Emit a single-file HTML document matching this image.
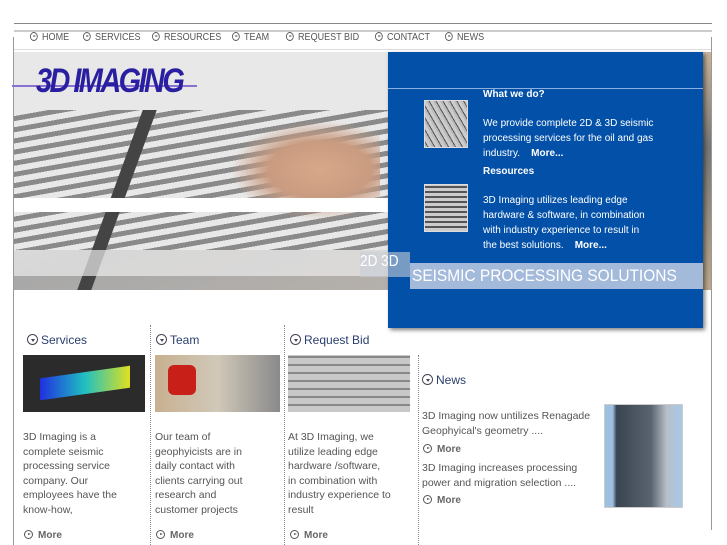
<!DOCTYPE html>
<html><head><style>
*{margin:0;padding:0;box-sizing:border-box}
body{width:727px;height:545px;background:#fff;font-family:"Liberation Sans",sans-serif;position:relative;overflow:hidden}
.a{position:absolute}
.nav{top:31px;font-size:10.5px;color:#555;transform:scaleX(0.86);transform-origin:left;white-space:nowrap}
.ic{display:inline-block;width:9px;height:9px;border:1px solid #555;border-radius:50%;position:relative;vertical-align:-1px;margin-right:5px}
.ic:after{content:"";position:absolute;left:2.5px;top:1.8px;border-left:3px solid #555;border-top:1.8px solid transparent;border-bottom:1.8px solid transparent}
.icd{display:inline-block;width:11px;height:11px;border:1px solid #445;border-radius:50%;position:relative;vertical-align:-1px;margin-right:3px}
.icd:after{content:"";position:absolute;left:2.5px;top:3.5px;border-top:3px solid #445;border-left:2px solid transparent;border-right:2px solid transparent}
h3{position:absolute;font-size:12px;font-weight:normal;color:#2a3e6e}
.t{position:absolute;font-size:10.5px;line-height:14.6px;color:#555}
.more{position:absolute;font-size:10px;color:#666;font-weight:bold}
.dot{position:absolute;border-left:1px dotted #888;width:0}
.w{color:#fff;font-size:10px;line-height:15px;position:absolute}
</style></head><body>
<div class="a" style="left:14px;top:23px;width:698px;height:1px;background:#888"></div>
<div class="a" style="left:14px;top:30px;width:698px;height:2px;background:#ccc"></div>
<div class="a" style="left:13px;top:37px;width:1px;height:508px;background:#999"></div>
<div class="a" style="left:711px;top:37px;width:1px;height:493px;background:#999"></div>
<div class="a" style="left:14px;top:49px;width:697px;height:1px;background:#ddd"></div>
<div class="a nav" style="left:30px;top:31px"><span class="ic"></span>HOME</div>
<div class="a nav" style="left:83px;top:31px"><span class="ic"></span>SERVICES</div>
<div class="a nav" style="left:152px;top:31px"><span class="ic"></span>RESOURCES</div>
<div class="a nav" style="left:232px;top:31px"><span class="ic"></span>TEAM</div>
<div class="a nav" style="left:286px;top:31px"><span class="ic"></span>REQUEST BID</div>
<div class="a nav" style="left:375px;top:31px"><span class="ic"></span>CONTACT</div>
<div class="a nav" style="left:445px;top:31px"><span class="ic"></span>NEWS</div>
<!-- hero -->
<div class="a" style="left:14px;top:52px;width:374px;height:238px;background:linear-gradient(160deg,#e0e0e0 0%,#c8c8c8 35%,#a8a8a8 60%,#b5b0ab 100%)"></div>
<div class="a" style="left:14px;top:52px;width:374px;height:58px;background:#e8e8e8"></div>
<div class="a" style="left:14px;top:110px;width:374px;height:140px;background:repeating-linear-gradient(170deg,#e8e8e8 0 6px,#8a8a8a 6px 11px)"></div>
<div class="a" style="left:110px;top:110px;width:14px;height:180px;background:#444;transform:skewX(-20deg)"></div>
<div class="a" style="left:230px;top:120px;width:150px;height:100px;background:radial-gradient(ellipse at 60% 50%,#d9a88a 0%,#c99b80 40%,transparent 70%)"></div>
<div class="a" style="left:703px;top:52px;width:8px;height:238px;background:linear-gradient(#c9b49a,#777 40%,#bca88c)"></div>
<div class="a" style="left:14px;top:198px;width:396px;height:14px;background:#fff"></div>
<div class="a" style="left:14px;top:250px;width:374px;height:26px;background:rgba(235,235,235,0.7)"></div>
<div class="a" style="left:12px;top:85px;width:185px;height:2px;background:#8a70d0"></div>
<div class="a" style="left:36px;top:62px;font-family:'Liberation Sans',sans-serif;font-style:italic;font-weight:bold;font-size:34px;color:#2a1fa0;letter-spacing:-3px;transform:scaleX(0.85);transform-origin:left">3D IMAGING</div>
<div class="a" style="left:388px;top:52px;width:315px;height:276px;background:#0250a8;box-shadow:2px 2px 4px rgba(0,0,0,.5)"></div>
<div class="a" style="left:388px;top:88px;width:315px;height:1px;background:#8cb0e0"></div>
<div class="a" style="left:410px;top:263px;width:293px;height:26px;background:#a4badb"></div>
<div class="a" style="left:360px;top:252px;width:50px;height:25px;background:rgba(200,205,215,0.6)"></div>
<div class="a" style="left:360px;top:253px;font-size:16px;color:#fff;transform:scaleX(0.85);transform-origin:left">2D 3D</div>
<div class="a" style="left:412px;top:266px;font-size:17px;color:#fff;transform:scaleX(0.91);transform-origin:left;white-space:nowrap">SEISMIC PROCESSING SOLUTIONS</div>
<div class="a" style="left:424px;top:100px;width:44px;height:48px;background:repeating-linear-gradient(60deg,#bbb 0 2px,#555 2px 3px,#ccc 3px 6px);border:1px solid #ddd"></div>
<div class="a" style="left:424px;top:184px;width:44px;height:48px;background:repeating-linear-gradient(0deg,#ccc 0 3px,#555 3px 5px);border:1px solid #ddd"></div>
<div class="w" style="left:483px;top:87px;font-weight:bold">What we do?</div>
<div class="w" style="left:483px;top:116px">We provide complete 2D &amp; 3D seismic<br>processing services for the oil and gas<br>industry. &nbsp;&nbsp;&nbsp;<b>More...</b></div>
<div class="w" style="left:483px;top:164px;font-weight:bold">Resources</div>
<div class="w" style="left:483px;top:193px">3D Imaging utilizes leading edge<br>hardware &amp; software, in combination<br>with industry experience to result in<br>the best solutions. &nbsp;&nbsp;&nbsp;<b>More...</b></div>
<!-- columns -->
<div class="dot" style="left:150px;top:325px;height:220px"></div>
<div class="dot" style="left:284px;top:325px;height:220px"></div>
<div class="dot" style="left:418px;top:355px;height:190px"></div>
<h3 style="left:27px;top:333px"><span class="icd"></span>Services</h3>
<h3 style="left:156px;top:333px"><span class="icd"></span>Team</h3>
<h3 style="left:290px;top:333px"><span class="icd"></span>Request Bid</h3>
<h3 style="left:422px;top:373px"><span class="icd"></span>News</h3>
<div class="a" style="left:23px;top:355px;width:122px;height:57px;background:#2b2b2b"></div>
<div class="a" style="left:40px;top:372px;width:90px;height:22px;background:linear-gradient(90deg,#2030e0,#20c0c0,#e0e020);transform:skewY(-8deg)"></div>
<div class="a" style="left:155px;top:355px;width:125px;height:57px;background:linear-gradient(90deg,#c8b090,#d0c8b8 50%,#8a8a8a)"></div>
<div class="a" style="left:168px;top:365px;width:28px;height:30px;background:#c82018;border-radius:6px"></div>
<div class="a" style="left:288px;top:355px;width:122px;height:57px;background:repeating-linear-gradient(0deg,#c8c8c8 0 6px,#888 6px 8px),#aaa"></div>
<div class="a" style="left:604px;top:404px;width:79px;height:104px;background:linear-gradient(90deg,#9fbfe0 10%,#3a4450 15%,#5a6470 60%,#b8c0c8 80%,#a8c8e8);border:1px solid #ccc"></div>
<div class="t" style="left:23px;top:430px">3D Imaging is a<br>complete seismic<br>processing service<br>company. Our<br>employees have the<br>know-how,</div>
<div class="t" style="left:155px;top:430px">Our team of<br>geophyicists are in<br>daily contact with<br>clients carrying out<br>research and<br>customer projects</div>
<div class="t" style="left:288px;top:430px">At 3D Imaging, we<br>utilize leading edge<br>hardware /software,<br>in combination with<br>industry experience to<br>result</div>
<div class="t" style="left:422px;top:409px">3D Imaging now untilizes Renagade<br>Geophyical's geometry ....</div>
<div class="t" style="left:422px;top:461px">3D Imaging increases processing<br>power and migration selection ....</div>
<div class="more" style="left:24px;top:530px"><span class="ic"></span>More</div>
<div class="more" style="left:156px;top:530px"><span class="ic"></span>More</div>
<div class="more" style="left:290px;top:530px"><span class="ic"></span>More</div>
<div class="more" style="left:423px;top:444px"><span class="ic"></span>More</div>
<div class="more" style="left:423px;top:495px"><span class="ic"></span>More</div>
</body></html>
